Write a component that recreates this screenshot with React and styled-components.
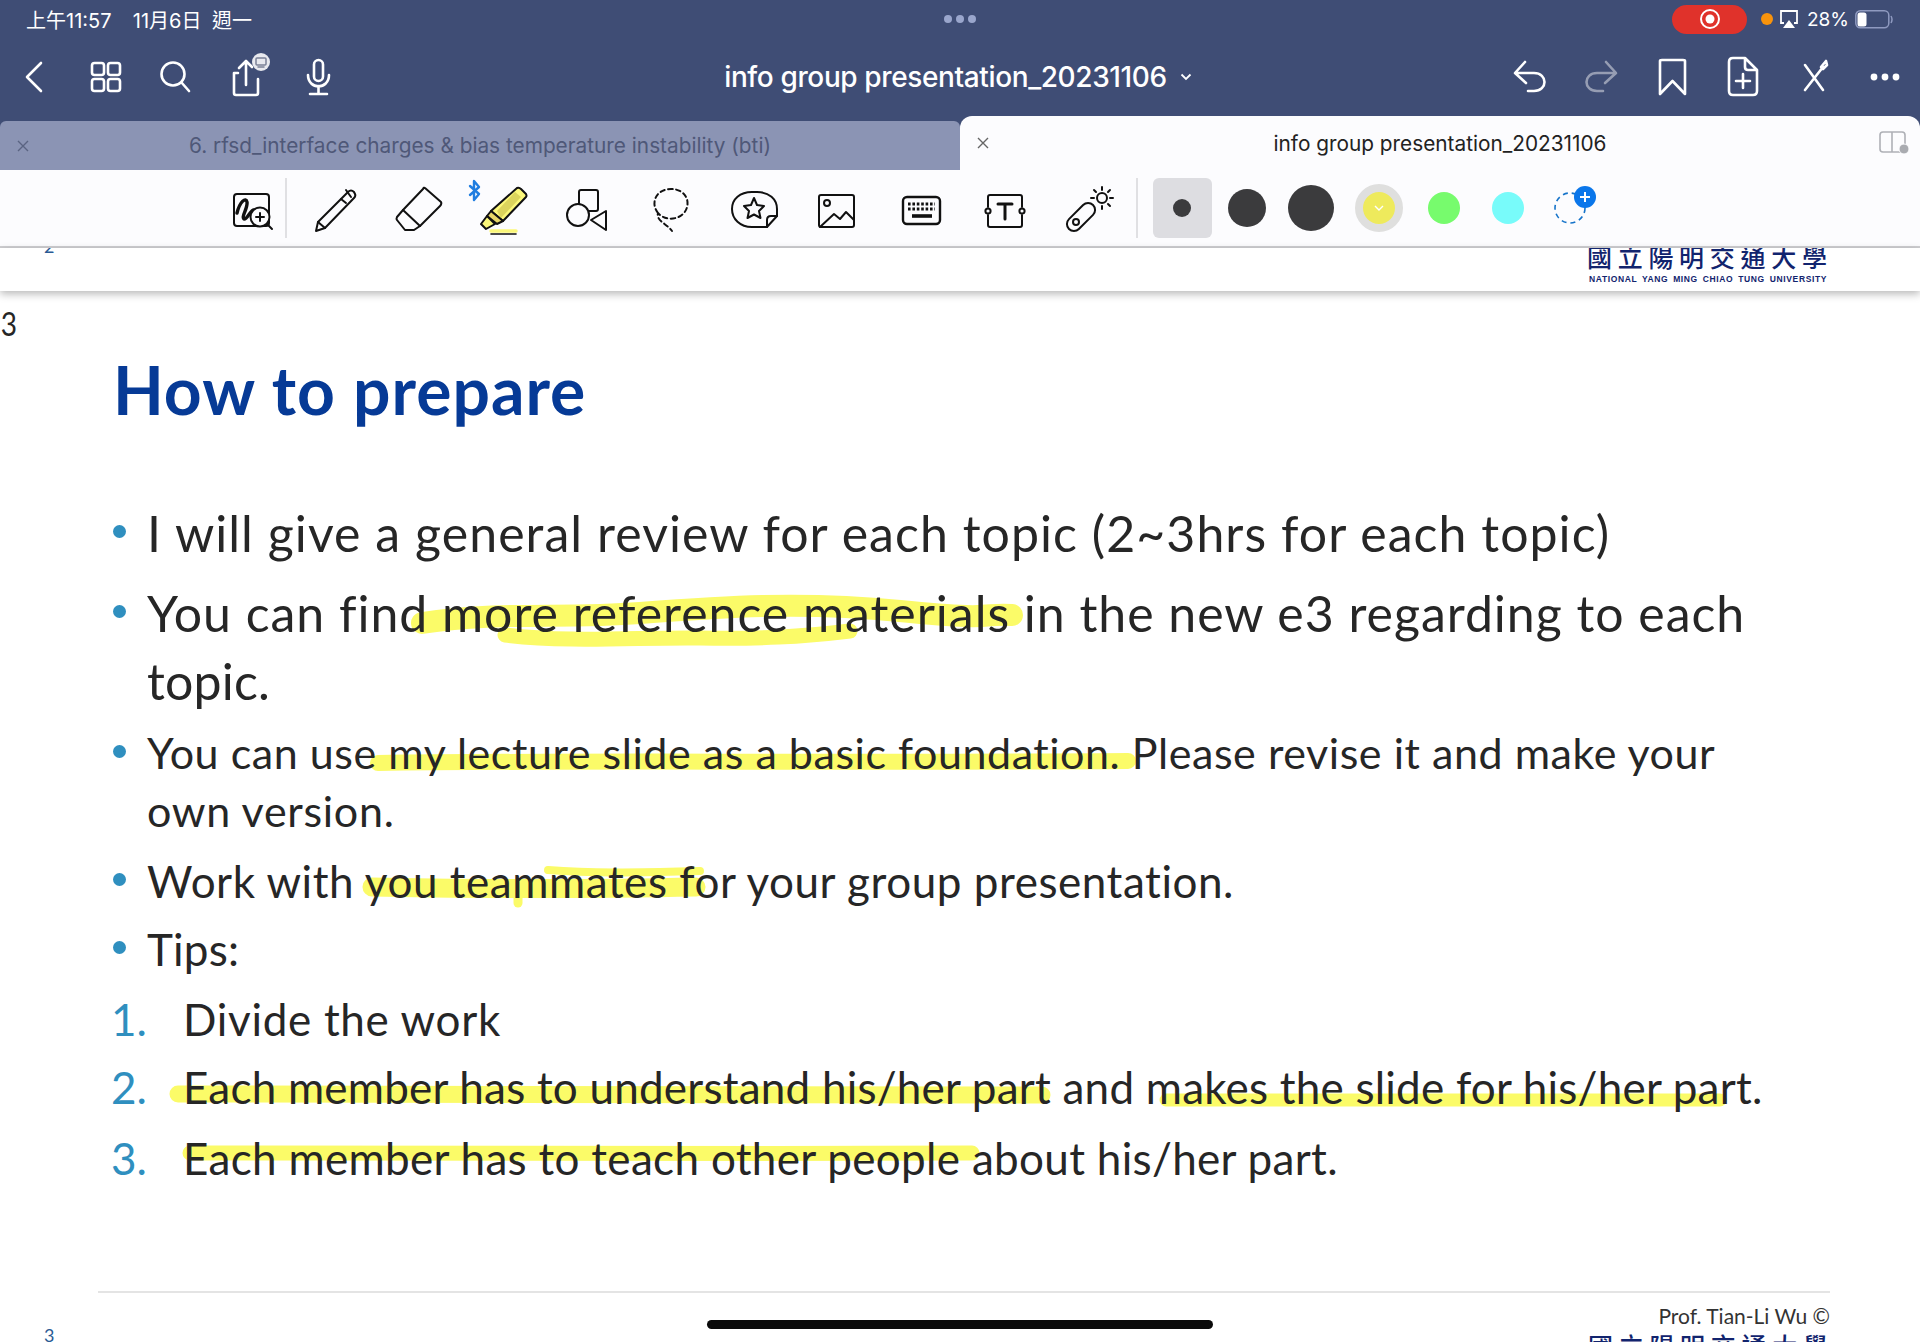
import React from "react";
import styled, { createGlobalStyle } from "styled-components";

const Global = createGlobalStyle`
  html, body { margin: 0; padding: 0; background: #fff; }
  body { width: 1920px; height: 1342px; overflow: hidden; font-family: "Inter", "Noto Sans CJK TC", sans-serif; }
`;

const Page = styled.div`
  position: relative;
  width: 1920px;
  height: 1342px;
  overflow: hidden;
  display: flex;
  flex-direction: column;
  background: #fff;
`;

const Top = styled.header`
  background: #3f4d75;
  color: #fff;
  flex: none;
`;

const StatusBar = styled.div`
  height: 38px;
  display: grid;
  grid-template-columns: 1fr 60px 1fr;
  align-items: center;
  padding: 0 27px 0 26px;
  font-size: 18px;
`;

const StatusText = styled.div`
  font-family: "Inter", "Noto Sans CJK TC", sans-serif;
  font-size: 20px;
  word-spacing: 5px;
  letter-spacing: 0;
`;

const Dots = styled.div`
  display: flex;
  justify-content: center;
  gap: 4px;
  span { width: 8px; height: 8px; border-radius: 50%; background: #9aa6cc; }
`;

const StatusRight = styled.div`
  display: flex;
  justify-content: flex-end;
  align-items: center;
  gap: 6px;
`;

const RecPill = styled.div`
  width: 75px;
  height: 29px;
  border-radius: 15px;
  background: #e0322b;
  display: flex;
  align-items: center;
  justify-content: center;
  margin-right: 8px;
`;

const OrangeDot = styled.span`
  width: 12px;
  height: 12px;
  border-radius: 50%;
  background: #f8930c;
`;

const Percent = styled.span`
  font-size: 19px;
  margin-left: 2px;
`;

const Nav = styled.div`
  height: 78px;
  display: grid;
  grid-template-columns: 426px 1fr 426px;
  align-items: center;
`;

const IconRow = styled.div`
  display: flex;
  align-items: center;
  justify-content: ${(p) => (p.$end ? "flex-end" : "flex-start")};
`;

const NavIcon = styled.div`
  width: ${(p) => p.$w || 71}px;
  height: 48px;
  display: flex;
  align-items: center;
  justify-content: center;
  opacity: ${(p) => (p.$dim ? 0.45 : 1)};
`;

const DocTitle = styled.div`
  display: flex;
  align-items: center;
  justify-content: center;
  gap: 13px;
  font-size: 28px;
  font-weight: 500;
  letter-spacing: -0.38px;
  white-space: nowrap;
  padding-right: 4px;
`;

const Tabs = styled.div`
  display: grid;
  grid-template-columns: 1fr 1fr;
  align-items: end;
  height: 54px;
  background: #3f4d75;
  flex: none;
`;

const Tab = styled.div`
  position: relative;
  height: ${(p) => (p.$active ? 54 : 49)}px;
  display: flex;
  align-items: center;
  justify-content: center;
  font-size: 20.8px;
  white-space: nowrap;
  box-sizing: border-box;
  color: ${(p) => (p.$active ? "#222" : "#4f5878")};
  background: ${(p) => (p.$active ? "#fcfcfe" : "#8b94b4")};
  border-radius: ${(p) => (p.$active ? "12px 12px 0 0" : "6px 6px 0 0")};
`;

const TabClose = styled.span`
  position: absolute;
  left: 16px;
  top: 50%;
  transform: translateY(-50%);
  display: flex;
`;

const TabSplit = styled.span`
  position: absolute;
  right: 11px;
  top: 15px;
  display: flex;
`;

const Toolbar = styled.div`
  flex: none;
  height: 78px;
  box-sizing: border-box;
  background: #fcfcfe;
  border-bottom: 2px solid #cfcfd2;
  display: flex;
  align-items: center;
  padding-left: 214px;
`;

const Tool = styled.div`
  width: ${(p) => p.$w || 83.6}px;
  height: 64px;
  flex: none;
  display: flex;
  align-items: center;
  justify-content: center;
  margin-top: 2px;
`;

const ToolDivider = styled.div`
  flex: none;
  width: 2px;
  height: 60px;
  background: #e0e0e3;
  margin: 0 ${(p) => p.$r}px 0 ${(p) => p.$l}px;
`;

const SwatchBox = styled.div`
  flex: none;
  width: ${(p) => p.$w}px;
  height: 60px;
  display: flex;
  align-items: center;
  justify-content: center;
  position: relative;
  border-radius: 6px;
  background: ${(p) => (p.$selected ? "#dddde1" : "transparent")};
  margin-right: ${(p) => (p.$selected ? 3 : 0)}px;
`;

const Dot = styled.span`
  width: ${(p) => p.$size}px;
  height: ${(p) => p.$size}px;
  border-radius: 50%;
  background: ${(p) => p.$color};
  display: flex;
  align-items: center;
  justify-content: center;
  color: #fff;
  box-sizing: content-box;
  border: ${(p) => (p.$ring ? "8px solid #dfdfde" : "none")};
`;

const AddBadge = styled.span`
  position: absolute;
  left: 31px;
  top: 8px;
  width: 22px;
  height: 22px;
  border-radius: 50%;
  background: #0a76ea;
  display: flex;
  align-items: center;
  justify-content: center;
`;

const PrevFooter = styled.div`
  flex: none;
  height: 43px;
  overflow: hidden;
  background: #fff;
  display: flex;
  justify-content: space-between;
  padding: 0 93px 0 44px;
  box-shadow: 0 3px 8px rgba(0, 0, 0, 0.28);
  position: relative;
  z-index: 2;
`;

const SmallPageNo = styled.div`
  font-family: "Lato", sans-serif;
  font-size: 18px;
  line-height: 18px;
  margin-top: -11px;
  color: #2a5a94;
`;

const Uni = styled.div`
  display: flex;
  flex-direction: column;
  align-items: flex-start;
  width: 240px;
`;

const UniName = styled.div`
  font-family: "Noto Sans CJK TC", sans-serif;
  font-size: 25px;
  line-height: 26px;
  margin-top: -5px;
  font-weight: 500;
  letter-spacing: 5.7px;
  white-space: nowrap;
  color: #12246e;
`;

const UniSub = styled.div`
  font-family: "Liberation Sans", sans-serif;
  font-size: 8.5px;
  font-weight: 700;
  line-height: 12px;
  margin: 4px 0 0 2px;
  letter-spacing: 0.62px;
  word-spacing: 2px;
  white-space: nowrap;
  color: #12246e;
`;

const Slide = styled.main`
  position: relative;
  flex: 1;
  min-height: 0;
  margin-top: 12px;
  background: #fff;
  font-family: "Lato", "Liberation Sans", sans-serif;
  color: #262626;
`;

const Ink = styled.svg`
  position: absolute;
  left: 0;
  top: 0;
  pointer-events: none;
`;

const SlideNo = styled.div`
  position: relative;
  font-size: 33px;
  line-height: 40px;
  padding-left: 1px;
  height: 40px;
  transform: scaleX(0.85);
  transform-origin: left;
`;

const SlideTitle = styled.h1`
  position: relative;
  margin: 9px 0 0 113px;
  height: 88px;
  font-size: 66px;
  line-height: 76px;
  font-weight: 700;
  letter-spacing: 1px;
  color: #063a96;
`;

const Lines = styled.div`
  position: relative;
  margin-top: 63px;
`;

const Line = styled.div`
  height: ${(p) => p.$h}px;
  display: flex;
  font-size: ${(p) => p.$size}px;
  line-height: 60px;
  white-space: nowrap;
  letter-spacing: ${(p) => p.$ls || 0}px;
`;

const Marker = styled.span`
  flex: none;
  width: 147px;
  height: 60px;
  display: flex;
  align-items: center;
  justify-content: flex-end;
  padding-right: 21px;
  box-sizing: border-box;
  &::before {
    content: "";
    display: ${(p) => (p.$bullet ? "block" : "none")};
    width: 13px;
    height: 13px;
    border-radius: 50%;
    background: #2f8fbf;
    margin-top: -4px;
  }
`;

const NumMarker = styled.span`
  flex: none;
  width: 183px;
  padding-left: 111px;
  box-sizing: border-box;
  color: #2f8fbf;
  letter-spacing: 0;
`;

const SlideFooter = styled.footer`
  position: absolute;
  left: 98px;
  right: 90px;
  top: 988px;
  border-top: 2px solid #e4e4e4;
  display: flex;
  flex-direction: column;
  align-items: flex-end;
`;

const Prof = styled.div`
  font-size: 21px;
  line-height: 26px;
  margin-top: 10px;
  color: #333;
`;

const NextNo = styled.div`
  position: absolute;
  left: 44px;
  top: 1021px;
  font-size: 18px;
  line-height: 22px;
  color: #2a5a94;
`;

const NextUni = styled.div`
  position: absolute;
  left: 1588px;
  top: 1034px;
`;

const HomeBar = styled.div`
  position: absolute;
  left: 707px;
  top: 1320px;
  width: 506px;
  height: 9px;
  border-radius: 5px;
  background: #0a0a0a;
  z-index: 5;
`;

const Svg = ({ w = 64, h = 64, children, sw = 2, stroke = "#111" }) => (
  <svg width={w} height={h} viewBox={`0 0 ${w} ${h}`} fill="none" stroke={stroke} strokeWidth={sw} strokeLinecap="round" strokeLinejoin="round" overflow="visible">
    {children}
  </svg>
);

const White = (p) => <Svg w={48} h={48} stroke="#fff" sw={2.6} {...p} />;

const navLeft = [
  { w: 68, icon: <White><path d="M31 10 L17 24 L31 38" /></White> },
  { w: 76, icon: (
    <White>
      <rect x="10" y="10" width="12" height="12" rx="2.5" />
      <rect x="26" y="10" width="12" height="12" rx="2.5" />
      <rect x="10" y="26" width="12" height="12" rx="2.5" />
      <rect x="26" y="26" width="12" height="12" rx="2.5" />
    </White>
  ) },
  { w: 64, icon: (
    <White>
      <circle cx="21" cy="21" r="11.5" />
      <path d="M29.5 29.5 L37 38" />
    </White>
  ) },
  { w: 74, icon: (
    <White>
      <path d="M17 20 H13 V40 Q13 42 15 42 H35 Q37 42 37 40 V26" />
      <path d="M25 32 V9 M18 15 L25 8 L31 14" />
      <circle cx="40" cy="9" r="9" fill="#e8e9ef" stroke="none" />
      <rect x="35" y="5" width="10" height="7" rx="1" stroke="#7a8097" strokeWidth="1.5" />
      <path d="M37 14 H43" stroke="#7a8097" strokeWidth="1.5" />
    </White>
  ) },
  { w: 72, icon: (
    <White>
      <rect x="20" y="7" width="9" height="21" rx="4.5" />
      <path d="M14 22 C14 37 35 37 35 22 M24.5 33 V40 M16 41 H33" />
    </White>
  ) },
];

const navRight = [
  <White key="undo"><path d="M19 9 L9 20 L20 30 M10 20 H28 C42 20 42 38 28 38 H22" /></White>,
  <White key="redo"><path d="M29 9 L39 20 L28 30 M38 20 H20 C6 20 6 38 20 38 H26" /></White>,
  <White key="mark"><path d="M12 8 Q12 7 14 7 H35 Q37 7 37 8 V41 L24.5 28 L12 41 Z" /></White>,
  <White key="doc">
    <path d="M26 5 H14 Q10 5 10 9 V38 Q10 42 14 42 H34 Q38 42 38 38 V17 Z M26 5 V14 Q26 17 29 17 H38" />
    <path d="M24 21 V35 M17 28 H31" />
  </White>,
  <White key="tools">
    <path d="M15 12 L33 37 M33 14 L15 37" />
    <path d="M31 14 L36 8 L37 12 L33 16" />
  </White>,
  <svg key="more" width="30" height="8" viewBox="0 0 30 8" fill="#fff"><circle cx="4" cy="4" r="3.4" /><circle cx="15" cy="4" r="3.4" /><circle cx="26" cy="4" r="3.4" /></svg>,
];

const tools = [
  <Svg key="pen">
    <path d="M12 54 L14 45 L44 15 Q47 12 50 15 L51 17 Q52 19 50 21 L21 51 Z" />
    <path d="M14 45 L21 51 M42 13 L47 20 M37 22 L42 26" />
  </Svg>,
  <Svg key="eraser">
    <path d="M38 11 L54 25 Q55 27 53 29 L33 49 L16 33 L36 12 Q37 10 38 11 Z" />
    <path d="M16 33 L10 40 Q9 42 10 43 L18 53 H27 L33 49" />
  </Svg>,
  <Svg key="marker">
    <path d="M46 11 Q48 10 50 12 L55 17 Q56 19 55 20 L32 44 L20 34 Z" fill="#fbf77a" />
    <path d="M44 15 L26 34 L30 41 L50 20 Z" fill="#dcd45c" stroke="none" />
    <path d="M20 34 L32 44 L26 47 L16 39 Z" fill="#e8d768" />
    <path d="M16 39 L24 47 L15 52 L10 47 Z" fill="#fbf77a" />
    <path d="M20 54 H45" stroke="#fbf77a" strokeWidth="3.5" />
    <path d="M20 57 H45" strokeWidth="1.6" />
    <path d="M-1 9 L8 17 L3 23 V4 L8 10 L-1 18" stroke="#1f7de0" strokeWidth="2.4" />
  </Svg>,
  <Svg key="shapes">
    <path d="M24 27 V15 Q24 13 26 13 H41 Q43 13 43 15 V32 Q43 34 41 34 H34" />
    <ellipse cx="23" cy="38" rx="11" ry="11" />
    <path d="M51 34 V53 L36 43 Z" />
  </Svg>,
  <Svg key="lasso">
    <path d="M20 36 C12 26 18 12 33 12 C48 12 54 26 46 36 C40 43 27 44 20 36 C18 44 28 46 34 54" strokeDasharray="4.5 3.5" />
  </Svg>,
  <Svg key="sticker">
    <path d="M45 50 H30 C18 50 10 42 10 32 C10 22 18 15 30 15 H35 C47 15 55 22 55 32 V39 Z" />
    <path d="M45 50 V43 Q45 39 49 39 H55" />
    <path d="M32 21 L35 28 L42 29 L37 34 L38.5 41 L32 37.5 L25.5 41 L27 34 L22 29 L29 28 Z" />
  </Svg>,
  <Svg key="image">
    <rect x="14" y="18" width="35" height="32" rx="2" />
    <circle cx="22" cy="26" r="3" />
    <path d="M15 50 L29 37 L35 42 L41 35 L49 43" />
  </Svg>,
  <Svg key="keys" sw={2.4}>
    <rect x="14" y="20" width="37" height="27" rx="4" />
    <path d="M19 27 H46 M19 32 H46" strokeWidth="3" strokeDasharray="2.6 1.8" strokeLinecap="butt" />
    <path d="M23 39 H43" strokeWidth="3.6" strokeLinecap="butt" />
  </Svg>,
  <Svg key="text">
    <path d="M15 30 V20 Q15 18 17 18 H47 Q49 18 49 20 V30 M15 38 V48 Q15 50 17 50 H47 Q49 50 49 48 V38" />
    <circle cx="15" cy="34" r="2.6" /><circle cx="49" cy="34" r="2.6" />
    <path d="M25 27 H39 M32 27 V42" strokeWidth="3" />
  </Svg>,
  <Svg key="laser">
    <rect x="18" y="23" width="14" height="34" rx="7" transform="rotate(45 25 40)" />
    <circle cx="20" cy="45" r="3" />
    <circle cx="46" cy="21" r="5" />
    <path d="M46 10 V13 M46 29 V32 M35 21 H38 M54 21 H57 M38 13 L40 15 M52 27 L54 29 M54 13 L52 15" />
  </Svg>,
];

const highlights = [
  { d: "M422 622 C500 610 560 618 640 612 S800 600 900 610 S980 612 1012 614", w: 22 },
  { d: "M505 634 C570 642 640 636 700 637 S800 636 850 630", w: 15 },
  { d: "M378 762 C560 759 800 762 1128 760", w: 16 },
  { d: "M372 886 C450 888 600 888 696 886", w: 19 },
  { d: "M548 869 C600 873 650 871 700 870", w: 8 },
  { d: "M518 895 V902", w: 9 },
  { d: "M178 1093 C400 1094 700 1096 1042 1094", w: 17 },
  { d: "M1166 1099 C1300 1098 1500 1100 1720 1099", w: 13 },
  { d: "M190 1152 C400 1150 700 1154 972 1152", w: 15 },
];

const lines = [
  { h: 80, size: 50, ls: 1.05, kind: "bullet", text: "I will give a general review for each topic (2~3hrs for each topic)" },
  { h: 68, size: 50, ls: 0.97, kind: "bullet", text: "You can find more reference materials in the new e3 regarding to each" },
  { h: 72, size: 50, ls: 0.2, kind: "blank", text: "topic." },
  { h: 58, size: 43, ls: 0.55, kind: "bullet", text: "You can use my lecture slide as a basic foundation. Please revise it and make your" },
  { h: 70, size: 43, ls: 0.7, kind: "blank", text: "own version." },
  { h: 68, size: 44, ls: 0.55, kind: "bullet", text: "Work with you teammates for your group presentation." },
  { h: 70, size: 44, ls: 0.2, kind: "bullet", text: "Tips:" },
  { h: 68, size: 44, ls: 0.7, num: "1.", text: "Divide the work" },
  { h: 71, size: 44, ls: 0.22, num: "2.", text: "Each member has to understand his/her part and makes the slide for his/her part." },
  { h: 60, size: 44, ls: 0.32, num: "3.", text: "Each member has to teach other people about his/her part." },
];

export default function App() {
  return (
    <Page>
      <Global />
      <Top>
        <StatusBar>
          <StatusText>上午11:57 &nbsp;11月6日 週一</StatusText>
          <Dots><span /><span /><span /></Dots>
          <StatusRight>
            <RecPill>
              <svg width="22" height="22" viewBox="0 0 22 22">
                <circle cx="11" cy="11" r="9" fill="none" stroke="#fff" strokeWidth="2" />
                <circle cx="11" cy="11" r="4.5" fill="#fff" />
              </svg>
            </RecPill>
            <OrangeDot />
            <svg width="20" height="20" viewBox="0 0 20 20" fill="none" stroke="#fff" strokeWidth="1.8">
              <path d="M5 14 H2 V2 H18 V14 H15" />
              <path d="M10 11 L16 19 H4 Z" fill="#fff" stroke="none" />
            </svg>
            <Percent>28%</Percent>
            <svg width="38" height="19" viewBox="0 0 38 19">
              <rect x="0.8" y="0.8" width="33" height="17" rx="4.5" fill="none" stroke="#8f9ac0" strokeWidth="1.5" />
              <rect x="2.5" y="2.5" width="9" height="14" rx="2.5" fill="#fff" />
              <path d="M36 6 Q38 9.5 36 13" fill="none" stroke="#8f9ac0" strokeWidth="1.5" />
            </svg>
          </StatusRight>
        </StatusBar>
        <Nav>
          <IconRow>
            {navLeft.map((n) => <NavIcon key={n.w} $w={n.w}>{n.icon}</NavIcon>)}
          </IconRow>
          <DocTitle>
            info group presentation_20231106
            <svg width="12" height="8" viewBox="0 0 12 8" fill="none" stroke="#fff" strokeWidth="1.8"><path d="M1.5 1.5 L6 6 L10.5 1.5" /></svg>
          </DocTitle>
          <IconRow $end>
            {navRight.map((icon) => <NavIcon key={icon.key} $dim={icon.key === "redo"}>{icon}</NavIcon>)}
          </IconRow>
        </Nav>
      </Top>
      <Tabs>
        <Tab>
          <TabClose>
            <svg width="14" height="14" viewBox="0 0 14 14" stroke="#5a6482" strokeWidth="1.4"><path d="M2 2 L12 12 M12 2 L2 12" /></svg>
          </TabClose>
          6. rfsd_interface charges &amp; bias temperature instability (bti)
        </Tab>
        <Tab $active>
          <TabClose>
            <svg width="14" height="14" viewBox="0 0 14 14" stroke="#666" strokeWidth="1.4"><path d="M2 2 L12 12 M12 2 L2 12" /></svg>
          </TabClose>
          info group presentation_20231106
          <TabSplit>
            <svg width="30" height="24" viewBox="0 0 30 24" fill="none" stroke="#aeb0b6" strokeWidth="1.6">
              <rect x="1" y="1" width="25" height="20" rx="3" />
              <path d="M13 1 V21" />
              <circle cx="25" cy="18" r="5" fill="#a9abb0" stroke="#fcfcfe" strokeWidth="1" />
            </svg>
          </TabSplit>
        </Tab>
      </Tabs>
      <Toolbar>
        <Tool $w={71}>
          <Svg>
            <rect x="16" y="17" width="35" height="32" rx="3" />
            <path d="M19 36 C22 24 28 20 29 25 C30 31 23 40 26 42 C29 43 33 32 36 33" strokeWidth="3.4" />
            <circle cx="42" cy="40" r="9.5" fill="#fcfcfe" />
            <path d="M42 36 V44 M38 40 H46 M49 47 L54 52" />
          </Svg>
        </Tool>
        <ToolDivider $l={0} $r={7} />
        {tools.map((icon) => <Tool key={icon.key}>{icon}</Tool>)}
        <ToolDivider $l={6} $r={15} />
        <SwatchBox $w={59} $selected><Dot $size={18} $color="#3b3b3d" /></SwatchBox>
        <SwatchBox $w={64}><Dot $size={38} $color="#3b3b3d" /></SwatchBox>
        <SwatchBox $w={64}><Dot $size={46} $color="#3b3b3d" /></SwatchBox>
        <SwatchBox $w={72}>
          <Dot $size={32} $color="#eeea5c" $ring>
            <svg width="10" height="7" viewBox="0 0 10 7" fill="none" stroke="#fff" strokeWidth="1.4"><path d="M1 1 L5 5 L9 1" /></svg>
          </Dot>
        </SwatchBox>
        <SwatchBox $w={58}><Dot $size={32} $color="#77fb6d" /></SwatchBox>
        <SwatchBox $w={70}><Dot $size={32} $color="#78fbfa" /></SwatchBox>
        <SwatchBox $w={54}>
          <svg width="34" height="34" viewBox="0 0 34 34" fill="none" stroke="#1573c9" strokeWidth="1.6" strokeDasharray="5 4"><circle cx="17" cy="17" r="15" /></svg>
          <AddBadge>
            <svg width="12" height="12" viewBox="0 0 12 12" stroke="#fff" strokeWidth="2"><path d="M6 1 V11 M1 6 H11" /></svg>
          </AddBadge>
        </SwatchBox>
      </Toolbar>
      <PrevFooter>
        <SmallPageNo>2</SmallPageNo>
        <Uni>
          <UniName>國立陽明交通大學</UniName>
          <UniSub>NATIONAL YANG MING CHIAO TUNG UNIVERSITY</UniSub>
        </Uni>
      </PrevFooter>
      <Slide>
        <Ink width="1920" height="1040" viewBox="0 302 1920 1040" fill="none" strokeLinecap="round" stroke="#fbfb68">
          {highlights.map((s) => <path key={s.d} d={s.d} strokeWidth={s.w} />)}
        </Ink>
        <SlideNo>3</SlideNo>
        <SlideTitle>How to prepare</SlideTitle>
        <Lines>
          {lines.map((l) => (
            <Line key={l.text} $h={l.h} $size={l.size} $ls={l.ls}>
              {l.num ? <NumMarker>{l.num}</NumMarker> : <Marker $bullet={l.kind === "bullet"} />}
              {l.text}
            </Line>
          ))}
        </Lines>
        <SlideFooter>
          <Prof>Prof. Tian-Li Wu ©</Prof>
        </SlideFooter>
        <NextNo>3</NextNo>
        <NextUni><UniName>國立陽明交通大學</UniName></NextUni>
      </Slide>
      <HomeBar />
    </Page>
  );
}
